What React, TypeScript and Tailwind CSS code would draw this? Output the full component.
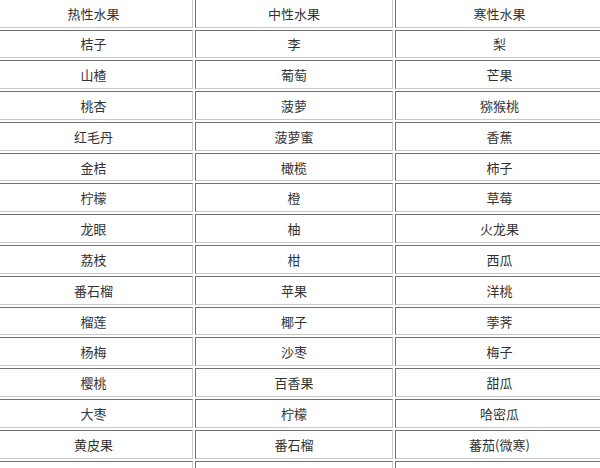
import React from "react";

const rows: string[][] = [
  ["热性水果", "中性水果", "寒性水果"],
  ["桔子", "李", "梨"],
  ["山楂", "葡萄", "芒果"],
  ["桃杏", "菠萝", "猕猴桃"],
  ["红毛丹", "菠萝蜜", "香蕉"],
  ["金桔", "橄榄", "柿子"],
  ["柠檬", "橙", "草莓"],
  ["龙眼", "柚", "火龙果"],
  ["荔枝", "柑", "西瓜"],
  ["番石榴", "苹果", "洋桃"],
  ["榴莲", "椰子", "荸荠"],
  ["杨梅", "沙枣", "梅子"],
  ["樱桃", "百香果", "甜瓜"],
  ["大枣", "柠檬", "哈密瓜"],
  ["黄皮果", "番石榴", "蕃茄(微寒)"],
  ["", "", ""],
];

export default function App() {
  return (
    <div className="w-[600px] h-[468px] overflow-hidden bg-white">
      <div
        className="grid grid-cols-[199px_198px_209px] auto-rows-[28.8px] gap-[2px] -ml-[6px] -mt-[1.3px] text-[13px] text-[#333]"
        style={{ fontFamily: '"Noto Sans CJK SC", "Noto Sans", sans-serif' }}
      >
        {rows.flatMap((r, i) =>
          r.map((c, j) => (
            <div
              key={`${i}-${j}`}
              className="flex items-center justify-center border border-t-[#707070] border-l-[#707070] border-b-[#c8c8c8] border-r-[#c8c8c8] leading-none"
            >
              {c}
            </div>
          ))
        )}
      </div>
    </div>
  );
}
